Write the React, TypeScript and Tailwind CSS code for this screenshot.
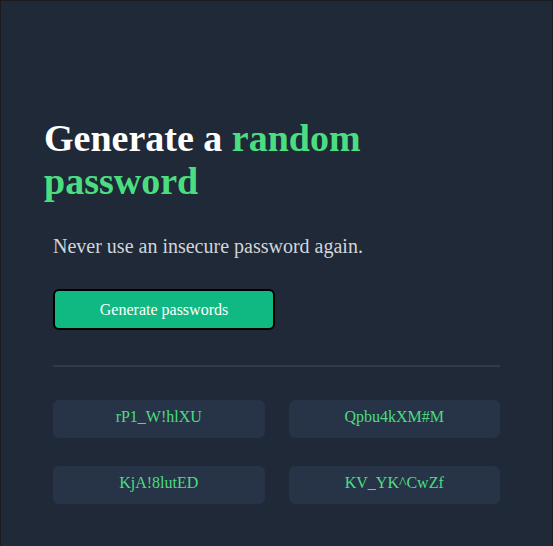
import React from "react";

const passwords = ["rP1_W!hlXU", "Qpbu4kXM#M", "KjA!8lutED", "KV_YK^CwZf"];

export default function App(): React.JSX.Element {
    return (
        <div className="min-h-[560px] w-full bg-[#1f2937] border-x border-t border-[#1b1b1d] font-['Liberation_Serif',serif]">
            <div className="pt-[116px] pl-[41px] pr-[52px]">
                <h1 className="ml-[2px] w-[340px] text-[38px] leading-[43px] font-bold text-white">
                    Generate a <span className="text-[#4ade80]">random password</span>
                </h1>
                <div className="pl-[11px]">
                    <p className="mt-[30px] text-[20px] leading-[26px] text-[#d1d5db]">
                        Never use an insecure password again.
                    </p>
                    <button className="mt-[30px] w-[222px] h-[41px] rounded-md border-2 border-black bg-[#10b981] text-white text-[16px]">
                        Generate passwords
                    </button>
                    <hr className="mt-[35px] border-t-2 border-[#2f3b4d]" />
                    <div className="mt-[33px] grid grid-cols-2 gap-x-[24px] gap-y-[28px]">
                        {passwords.map((pw, index) => (
                            <div
                                key={index}
                                className="h-[38px] rounded-md bg-[#273447] flex items-center justify-center text-[16px] text-[#4ade80] pb-[4px]"
                            >
                                {pw}
                            </div>
                        ))}
                    </div>
                </div>
            </div>
        </div>
    );
}
